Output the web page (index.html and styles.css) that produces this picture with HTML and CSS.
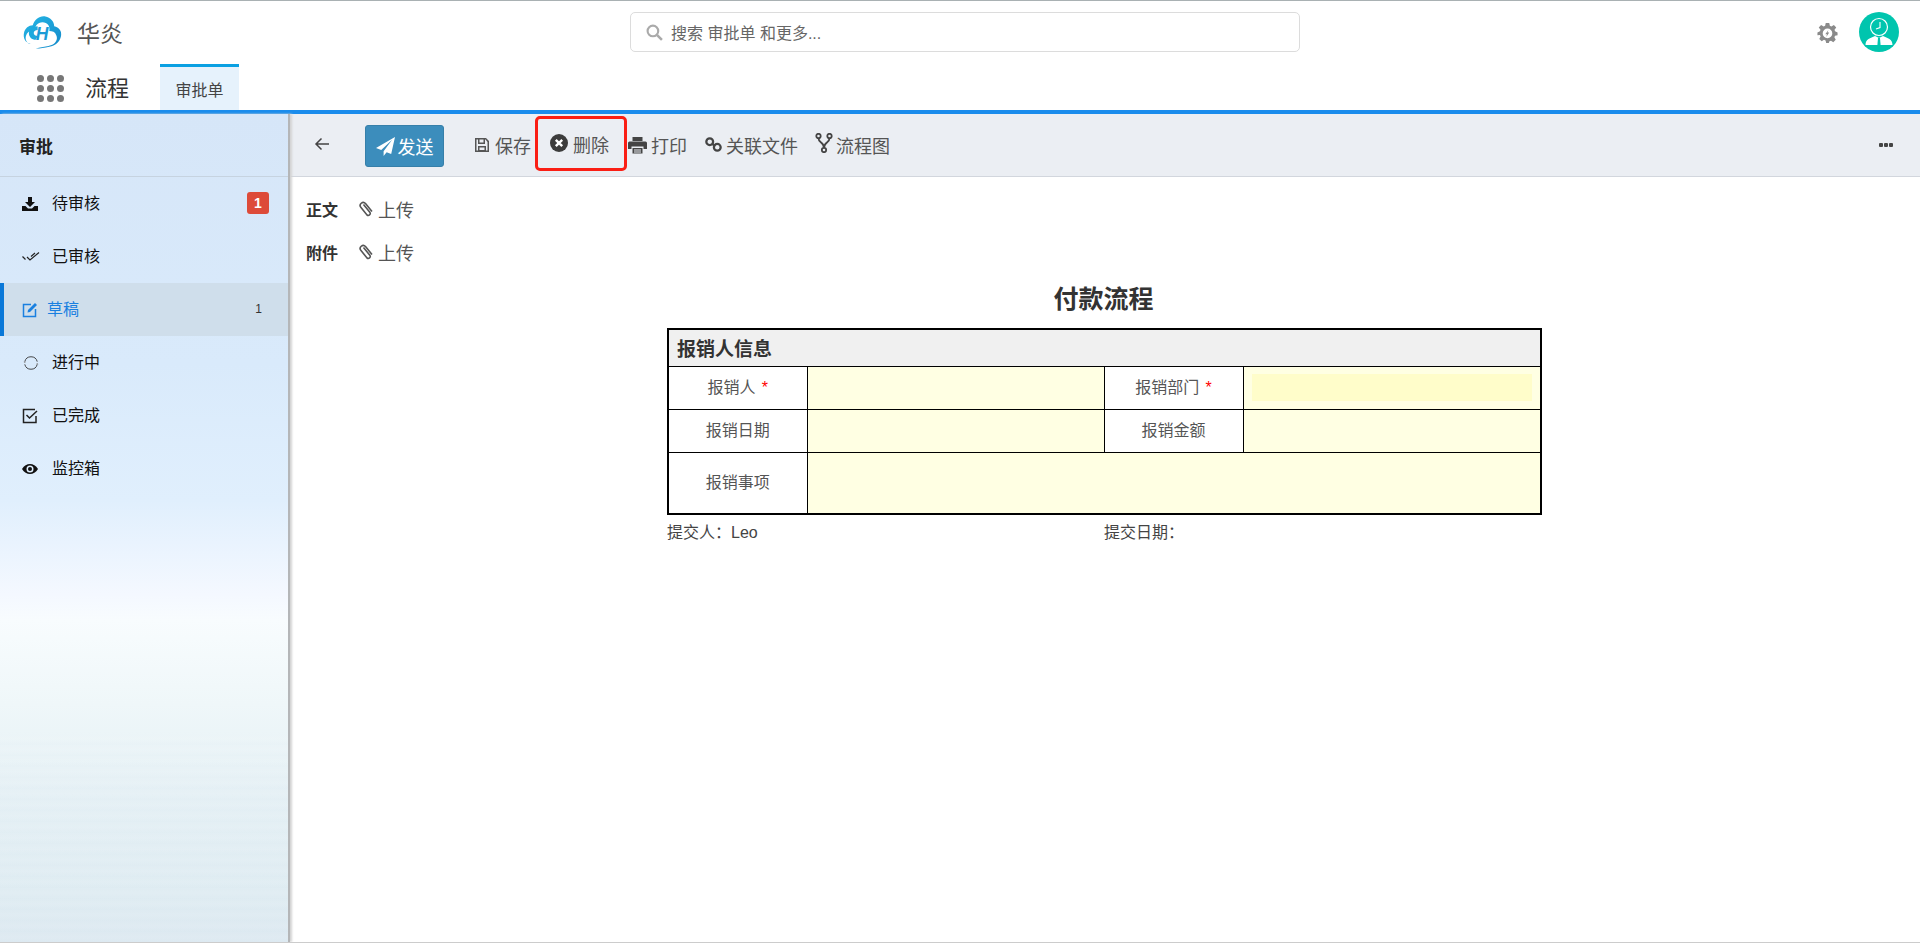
FILE: index.html
```html
<!DOCTYPE html>
<html lang="zh-CN">
<head>
<meta charset="utf-8">
<title>流程 - 审批单</title>
<link rel="stylesheet" href="styles.css">
</head>
<body>
<header class="topbar">
  <div class="brand">
    <svg class="logo" viewBox="0 0 40 36">
      <defs>
        <linearGradient id="lg" x1="0" y1="0" x2="1" y2="1"><stop offset="0" stop-color="#25b7e6"/><stop offset="1" stop-color="#1489c9"/></linearGradient>
      </defs>
      <path d="M8 30C2 29 0 24 1 19c1-5 5-8 9-8 2-6 7-10 13-9 5 1 9 5 9 10 5 1 8 5 7 10-1 6-6 10-12 11-5 1-9 2-14 2 6-2 12-2 17-4 4-2 6-6 4-10-1-3-4-4-7-4 1-5-2-9-7-9-5 0-8 4-8 9-4-1-8 1-9 5-1 4 1 6 3 8z" fill="url(#lg)"/>
      <path d="M15 12c-5 0-9 3-9 7s3 7 7 7l2-4c-2 0-4-1-4-3s2-3 4-3z" fill="#1ea9de"/>
      <text x="13" y="26" class="logo-h">H</text>
    </svg>
    <span class="brand-name">华炎</span>
  </div>
  <div class="search">
    <svg class="search-icon" viewBox="0 0 16 16"><circle cx="6.5" cy="6.5" r="5" fill="none" stroke="#aaa" stroke-width="2"/><path d="M10.5 10.5 15 15" stroke="#aaa" stroke-width="2.4"/></svg>
    <span>搜索 审批单 和更多...</span>
  </div>
  <div class="top-actions">
    <svg class="gear" viewBox="0 0 24 24"><path fill="#8a8a8a" fill-rule="evenodd" d="M10 1h4l.7 3.2 1.7.8L19.300 3.400l2.700 3-2 2.500.6 1.800L23.500 12v3l-2.900.8-.7 1.700 1.500 2.800-2.800 2.700-2.600-1.700-1.800.7L13.500 24h-3l-.7-3-1.800-.700-2.600 1.700-2.800-2.700 1.500-2.800-.7-1.700L.5 15v-3l2.900-1.300.6-1.800-2-2.500 2.700-3L7.600 5l1.700-.8zM12 7.500a5.500 5.500 0 1 0 0 11 5.500 5.500 0 0 0 0-11z"/><path fill="#8a8a8a" d="M13 9l-3.500 5h2l-1 3 3.500-5h-2z"/></svg>
    <svg class="avatar" viewBox="0 0 40 40">
      <circle cx="20" cy="20" r="20" fill="#00c5ae"/>
      <path d="M6.500 33c0-6 5-7 9.500-9l4 2 4-2c4.500 2 9.500 3 9.500 9z" fill="#fff"/>
      <path d="M19 26h2l.6 7h-3.200z" fill="#00c5ae"/>
      <circle cx="20" cy="15" r="8.500" fill="#00c5ae" stroke="#fff" stroke-width="1.200"/>
      <path d="M21 10v5.500l-4 1.500" fill="none" stroke="#fff" stroke-width="1.100"/>
    </svg>
  </div>
</header>

<nav class="appbar">
  <div class="app-dots"><i></i><i></i><i></i><i></i><i></i><i></i><i></i><i></i><i></i></div>
  <span class="app-name">流程</span>
  <a class="tab">审批单</a>
</nav>

<div class="layout">
  <aside class="sidebar">
    <div class="side-title">审批</div>
    <ul class="side-list">
      <li class="side-item">
        <svg class="side-icon" viewBox="0 0 16 16"><path d="M6 1h4v5h3L8 11 3 6h3zM0 10h3.500L6 12.500h4l2.500-2.500H16v5H0z" fill="#111"/></svg>
        <span>待审核</span><b class="badge">1</b>
      </li>
      <li class="side-item">
        <svg class="side-icon side-icon-lg" viewBox="0 0 18 16"><path d="M.5 7.500 3.500 10.500M5 8l3 3 9-7.500M9 7.500 13 4" fill="none" stroke="#222" stroke-width="1.200"/></svg>
        <span>已审核</span>
      </li>
      <li class="side-item is-active">
        <svg class="side-icon" viewBox="0 0 16 16"><path d="M9 2.500H1.500v12h12V7" fill="none" stroke="#1a80e0" stroke-width="1.500"/><path d="M6 8l7-7 2 2-7 7-2.500.5z" fill="#1a80e0"/></svg>
        <span>草稿</span><em class="count">1</em>
      </li>
      <li class="side-item">
        <svg class="side-icon side-icon-lg" viewBox="0 0 18 18"><path d="M2 7.500A7.200 7.200 0 0 1 16 7.500M16 10.500A7.200 7.200 0 0 1 2 10.500" fill="none" stroke="#333" stroke-width="1"/><path d="M.5 7.500 2 9l1.500-1.500zM14.500 10.500 16 9l1.500 1.500z" fill="#888"/></svg>
        <span>进行中</span>
      </li>
      <li class="side-item">
        <svg class="side-icon" viewBox="0 0 16 16"><path d="M14 8v6.500H1.500v-13H13" fill="none" stroke="#222" stroke-width="1.500"/><path d="M4.500 7l3 3L15 3" fill="none" stroke="#222" stroke-width="1.500"/></svg>
        <span>已完成</span>
      </li>
      <li class="side-item">
        <svg class="side-icon" viewBox="0 0 16 12"><path fill-rule="evenodd" d="M0 6c2-3.500 5-5 8-5s6 1.500 8 5c-2 3.500-5 5-8 5S2 9.500 0 6zm8-3.500a3.500 3.500 0 1 0 0 7 3.500 3.500 0 0 0 0-7z" fill="#111"/><circle cx="8" cy="6" r="2" fill="#111"/></svg>
        <span>监控箱</span>
      </li>
    </ul>
  </aside>

  <main class="content">
    <div class="toolbar">
      <svg class="tool-back" viewBox="0 0 16 14"><path d="M15 7H2M7.500 1.500 2 7l5.500 5.500" fill="none" stroke="#444" stroke-width="1.500"/></svg>
      <button class="send">
        <svg class="send-icon" viewBox="0 0 20 20"><path d="M20 0 0 11.500l5.500 2.300L17 3 8 15v5l3.200-4 4.800 2z" fill="#fff"/></svg>发送
      </button>
      <a class="tool tool-save">
        <svg viewBox="0 0 16 16"><path fill-rule="evenodd" d="M1 1h11l3 3v11H1zm1.500 1.500v11h11V5L11.500 2.500H11V7H4V2.500zm3 0V5.500h4v-3zM4 9h8v4.500H4zm1.500 1.500V13h5v-2.500z" fill="#555"/></svg>保存
      </a>
      <a class="tool tool-delete">
        <svg viewBox="0 0 18 18"><circle cx="9" cy="9" r="9" fill="#3c3c3c"/><path d="M5.800 5.800l6.400 6.400M12.200 5.800l-6.400 6.400" stroke="#fff" stroke-width="2.400"/></svg>删除
      </a>
      <a class="tool tool-print">
        <svg viewBox="0 0 19 18"><path d="M4.500 1h10v4h-10zM1.500 5.500h16a1.500 1.500 0 0 1 1.500 1.500v6h-3.500v-2.500h-12V13H0V7a1.500 1.500 0 0 1 1.500-1.500zM4.500 12h10v5.500h-10z" fill="#444"/><path d="M6 14h7M6 16h7" stroke="#eceff4"/></svg>打印
      </a>
      <a class="tool tool-link">
        <svg viewBox="0 0 18 18"><circle cx="5" cy="6" r="3.600" fill="none" stroke="#444" stroke-width="2.400"/><circle cx="13" cy="12" r="3.600" fill="none" stroke="#444" stroke-width="2.400"/><path d="M7 8l4 2.500" stroke="#444" stroke-width="2.400"/></svg>关联文件
      </a>
      <a class="tool tool-flow">
        <svg viewBox="0 0 18 20"><circle cx="3.500" cy="3" r="2.200" fill="none" stroke="#444" stroke-width="1.800"/><circle cx="14.500" cy="3" r="2.200" fill="none" stroke="#444" stroke-width="1.800"/><circle cx="9" cy="17" r="2.200" fill="none" stroke="#444" stroke-width="1.800"/><path d="M3.500 5.200c0 5 5.500 3.500 5.500 9.600M14.500 5.200c0 5-5.500 3.500-5.500 9.600" fill="none" stroke="#444" stroke-width="1.800"/></svg>流程图
      </a>
      <span class="tool-more"><i></i><i></i><i></i></span>
    </div>

    <div class="doc">
      <div class="attach-row">
        <label class="attach-label">正文</label>
        <a class="upload">
          <svg viewBox="0 0 14 16"><path d="M4 3.500l6.500 8a2 2 0 0 1-3 2.500L1.500 6.500a3 3 0 0 1 4.500-4l6.500 8" fill="none" stroke="#555" stroke-width="1.600"/></svg>上传
        </a>
      </div>
      <div class="attach-row">
        <label class="attach-label">附件</label>
        <a class="upload">
          <svg viewBox="0 0 14 16"><path d="M4 3.500l6.500 8a2 2 0 0 1-3 2.500L1.500 6.500a3 3 0 0 1 4.500-4l6.500 8" fill="none" stroke="#555" stroke-width="1.600"/></svg>上传
        </a>
      </div>

      <section class="form">
        <h1 class="form-title">付款流程</h1>
        <table class="form-table">
          <colgroup><col class="c1"><col class="c2"><col class="c3"><col class="c4"></colgroup>
          <tr class="row-head"><th colspan="4">报销人信息</th></tr>
          <tr class="row">
            <td class="cell-label">报销人 <span class="req">*</span></td>
            <td class="cell-value"></td>
            <td class="cell-label">报销部门 <span class="req">*</span></td>
            <td class="cell-value"><div class="focus-input"></div></td>
          </tr>
          <tr class="row">
            <td class="cell-label">报销日期</td>
            <td class="cell-value"></td>
            <td class="cell-label">报销金额</td>
            <td class="cell-value"></td>
          </tr>
          <tr class="row-tall">
            <td class="cell-label">报销事项</td>
            <td class="cell-value" colspan="3"></td>
          </tr>
        </table>
        <div class="form-foot">
          <span>提交人：Leo</span>
          <span>提交日期：</span>
        </div>
      </section>
    </div>
  </main>
</div>
</body>
</html>
```
FILE: styles.css
```css
* { box-sizing: border-box; }
html, body { height: 100%; }
body {
  margin: 0;
  height: 943px;
  overflow: hidden;
  display: flex;
  flex-direction: column;
  background: #fff;
  border-top: 1px solid #a9b1b3;
  border-bottom: 1px solid #ccc;
  font-family: "Liberation Sans", "Noto Sans CJK SC", sans-serif;
  font-size: 16px;
  color: #444;
}
a { color: inherit; text-decoration: none; }

/* top bar */
.topbar {
  height: 62px;
  flex: none;
  display: flex;
  align-items: center;
}
.brand {
  width: 630px;
  flex: none;
  display: flex;
  align-items: center;
  padding-left: 23px;
}
.logo { width: 39px; height: 36px; }
.logo-h { font: italic bold 18px "Liberation Sans", sans-serif; fill: #1c9bd6; }
.brand-name { margin-left: 15px; font-size: 23px; color: #555; }
.search {
  width: 670px;
  height: 40px;
  flex: none;
  display: flex;
  align-items: center;
  gap: 8px;
  padding-left: 15px;
  border: 1px solid #dcdcdc;
  border-radius: 5px;
  color: #666;
  font-size: 16px;
}
.search-icon { width: 17px; height: 17px; }
.top-actions {
  margin-left: auto;
  display: flex;
  align-items: center;
  gap: 21px;
  padding-right: 21px;
}
.gear { width: 21px; height: 23px; }
.avatar { width: 40px; height: 40px; }

/* app bar */
.appbar {
  height: 51px;
  flex: none;
  display: flex;
  align-items: flex-end;
  border-bottom: 4px solid #1a8cec;
  padding-left: 37px;
}
.app-dots {
  width: 27px;
  display: grid;
  grid-template-columns: repeat(3, 7px);
  gap: 3px;
  margin-bottom: 8px;
}
.app-dots i { width: 7px; height: 7px; border-radius: 50%; background: #777; }
.app-name {
  margin-left: 21px;
  margin-bottom: 5px;
  font-size: 22px;
  line-height: 32px;
  color: #333;
}
.tab {
  margin-left: 31px;
  width: 79px;
  height: 46px;
  display: flex;
  align-items: center;
  justify-content: center;
  background: #e6f2fc;
  border-top: 3px solid #0aa0e2;
  font-size: 16px;
  color: #444;
}

/* layout */
.layout { flex: 1; display: flex; min-height: 0; }
.sidebar {
  width: 290px;
  flex: none;
  border-right: 2px solid #b4b6b8;
  box-shadow: 2px 0 2px #d4d4d4;
  background:
    repeating-linear-gradient(to bottom, rgba(255,255,255,0) 0, rgba(255,255,255,.07) 5px, rgba(200,220,230,.05) 11px) 0 620px no-repeat,
    linear-gradient(to bottom, #d6e6f8 0, #d9eafb 250px, #e0effd 386px, #f4f8ff 480px, #f8fcfe 506px, #eff7f9 590px, #e5f0f5 680px, #dfecf2 780px, #dde9f1 828px);
  position: relative;
  z-index: 1;
}
.side-title {
  height: 63px;
  display: flex;
  align-items: center;
  padding-left: 19px;
  font-size: 17px;
  font-weight: 700;
  color: #222;
  border-bottom: 1px solid #c6d3e0;
}
.side-list { list-style: none; margin: 0; padding: 0; }
.side-item {
  height: 53px;
  display: flex;
  align-items: center;
  padding: 0 19px 0 22px;
  color: #111;
  font-size: 16px;
}
.side-item span { margin-top: -3px; }
.side-icon { width: 16px; height: 16px; margin-right: 14px; flex: none; }
.side-icon-lg { width: 18px; height: 16px; margin-right: 12px; overflow: visible; }
.badge {
  margin-left: auto;
  margin-top: -2px;
  width: 22px;
  height: 22px;
  border-radius: 3px;
  background: #dd4b39;
  color: #fff;
  font-size: 14px;
  line-height: 22px;
  text-align: center;
}
.count {
  margin-left: auto;
  margin-right: 7px;
  margin-top: -2px;
  font-style: normal;
  font-size: 12px;
  color: #333;
}
.is-active {
  background: #cfdeeb;
  color: #1a80e0;
  border-left: 4px solid #0a78d8;
  padding-left: 18px;
}
.is-active .side-icon { margin-right: 9px; }

/* content */
.content { flex: 1; min-width: 0; display: flex; flex-direction: column; }
.toolbar {
  height: 63px;
  flex: none;
  display: flex;
  align-items: center;
  padding: 0 27px 0 24px;
  background: #ebeef3;
  border-bottom: 1px solid #d2d6dd;
  font-size: 18px;
  color: #555;
}
.tool-back { width: 16px; height: 14px; margin-top: -3px; }
.send {
  margin-left: 35px;
  width: 79px;
  height: 42px;
  margin-top: 2px;
  display: flex;
  align-items: center;
  justify-content: center;
  gap: 3px;
  padding: 0;
  background: #3c8dbc;
  border: 1px solid #367fa9;
  border-radius: 3px;
  color: #fff;
  font: inherit;
}
.send-icon { width: 19px; height: 19px; }
.tool { display: flex; align-items: center; white-space: nowrap; margin-top: -1px; }
.tool svg { flex: none; }
.tool-save { margin-left: 30px; gap: 5px; }
.tool-save svg { width: 16px; height: 16px; }
.tool-delete {
  margin-left: 4px;
  width: 92px;
  height: 55px;
  padding-left: 12px;
  gap: 5px;
  border: 3px solid #fa1e14;
  border-radius: 5px;
  margin-top: -3px;
}
.tool-delete svg { width: 18px; height: 18px; margin-top: -2px; }
.tool-print { margin-left: 1px; gap: 4px; }
.tool-print svg { width: 19px; height: 18px; }
.tool-link { margin-left: 18px; gap: 4px; }
.tool-link svg { width: 17px; height: 17px; }
.tool-flow { margin-left: 17px; gap: 3px; }
.tool-flow svg { width: 18px; height: 20px; margin-top: -3px; }
.tool-more { margin-left: auto; display: flex; gap: 1px; }
.tool-more i { width: 4px; height: 4px; border-radius: 1px; background: #444; }

.doc { padding: 10px 0 0 16px; flex: 1; position: relative; }
.attach-row { height: 43px; display: flex; align-items: center; }
.attach-label { width: 53px; font-size: 16px; font-weight: 700; color: #333; }
.upload { display: flex; align-items: center; gap: 4px; font-size: 18px; color: #555; }
.upload svg { width: 15px; height: 16px; }

.form { width: 873px; margin: 0 0 0 361px; }
.form-title {
  margin: 8px 0 0;
  height: 47px;
  font-size: 25px;
  line-height: 36px;
  font-weight: 700;
  text-align: center;
  color: #333;
}
.form-table {
  width: 873px;
  table-layout: fixed;
  border-collapse: collapse;
  border: 2px solid #000;
  font-size: 16px;
}
.c1 { width: 139px; }
.c2 { width: 297px; }
.c3 { width: 139px; }
.c4 { width: 298px; }
.form-table th, .form-table td { border: 1px solid #000; padding: 0; }
.row-head th {
  height: 37px;
  padding-left: 8px;
  background: #f0f0f0;
  text-align: left;
  font-size: 19px;
  color: #333;
}
.row td { height: 43px; }
.row-tall td { height: 62px; }
.cell-label { text-align: center; color: #555; background: #fff; }
.form-table td.cell-label { padding-bottom: 3px; }
.cell-value { background: #ffffe3; }
.req { color: #f00; margin-left: 2px; }
.focus-input { height: 27px; margin: 0 8px; background: #fffdca; }
.form-foot {
  display: grid;
  grid-template-columns: 437px 1fr;
  margin-top: 6px;
  font-size: 16px;
  line-height: 24px;
  color: #444;
}
```
